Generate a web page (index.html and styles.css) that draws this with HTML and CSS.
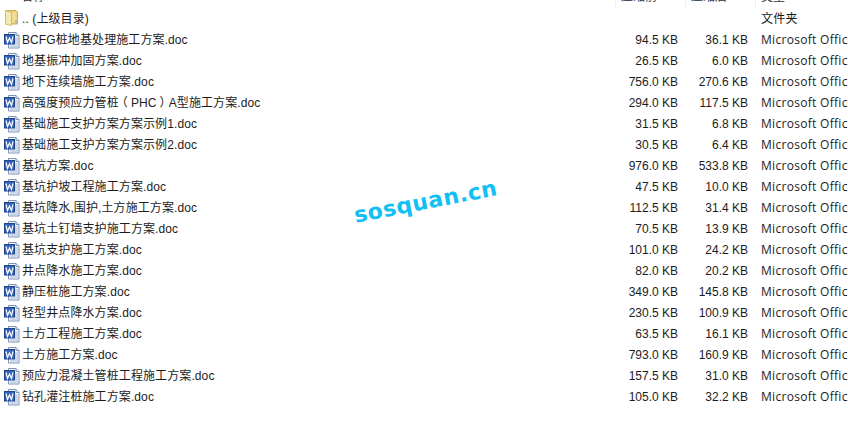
FILE: index.html
```html
<!DOCTYPE html>
<html lang="zh-CN">
<head>
    <meta charset="UTF-8">
    <title>sosquan.cn</title>
    <link rel="stylesheet" href="styles.css">
</head>
<body>
    <svg class="defs" width="0" height="0">
        <symbol id="doc" viewBox="0 0 16 17">
            <path d="M4.500.5h7.500l3 3v12.500h-10.500z" fill="#f8fafd" stroke="#7d93b8"/>
            <path d="M12 .5v3h3" fill="#dbe4f2" stroke="#7d93b8"/>
            <path d="M11 6h3M11 8h3M11 10h3M11 12h3M6 14h8" stroke="#a4b5d0"/>
            <rect x=".5" y="2.500" width="10" height="9.500" fill="#3566bb" stroke="#1f4288"/>
            <path d="M2 4.500l1.500 6 2-4.500 2 4.500 1.500-6" fill="none" stroke="#fff" stroke-width="1.200"/>
        </symbol>
    </svg>

    <div class="list">
        <div class="head">
            <span class="head-name">名称</span>
            <span class="head-cell">压缩前</span>
            <span class="head-cell">压缩后</span>
            <span class="head-cell">类型</span>
        </div>

        <div class="row">
            <span class="name">
                <svg class="icon folder" viewBox="0 0 16 17">
                    <path d="M1.500 .5h10.500l1.500 1.500v12h-12z" fill="#e8cb74" stroke="#d2b157"/>
                    <path d="M8 2h4.500v11h-4.500z" fill="#f0dc96"/>
                    <path d="M1.500 .5l6 2v13l-6-1.500z" fill="#f7eab0" stroke="#d8bb66"/>
                    <path d="M11.500 10h1v3h-1z" fill="#6fa8dc"/>
                </svg>
                .. (上级目录)
            </span>
            <span class="size"></span>
            <span class="packed"></span>
            <span class="type">文件夹</span>
        </div>
        <div class="row"><span class="name"><svg class="icon"><use href="#doc"/></svg>BCFG桩地基处理施工方案.doc</span><span class="size">94.5 KB</span><span class="packed">36.1 KB</span><span class="type">Microsoft Office</span></div>
        <div class="row"><span class="name"><svg class="icon"><use href="#doc"/></svg>地基振冲加固方案.doc</span><span class="size">26.5 KB</span><span class="packed">6.0 KB</span><span class="type">Microsoft Office</span></div>
        <div class="row"><span class="name"><svg class="icon"><use href="#doc"/></svg>地下连续墙施工方案.doc</span><span class="size">756.0 KB</span><span class="packed">270.6 KB</span><span class="type">Microsoft Office</span></div>
        <div class="row"><span class="name"><svg class="icon"><use href="#doc"/></svg><span>高强度预应力管桩<span class="paren-open">（</span>PHC<span class="paren-close">）</span>A型施工方案.doc</span></span><span class="size">294.0 KB</span><span class="packed">117.5 KB</span><span class="type">Microsoft Office</span></div>
        <div class="row"><span class="name"><svg class="icon"><use href="#doc"/></svg>基础施工支护方案方案示例1.doc</span><span class="size">31.5 KB</span><span class="packed">6.8 KB</span><span class="type">Microsoft Office</span></div>
        <div class="row"><span class="name"><svg class="icon"><use href="#doc"/></svg>基础施工支护方案方案示例2.doc</span><span class="size">30.5 KB</span><span class="packed">6.4 KB</span><span class="type">Microsoft Office</span></div>
        <div class="row"><span class="name"><svg class="icon"><use href="#doc"/></svg>基坑方案.doc</span><span class="size">976.0 KB</span><span class="packed">533.8 KB</span><span class="type">Microsoft Office</span></div>
        <div class="row"><span class="name"><svg class="icon"><use href="#doc"/></svg>基坑护坡工程施工方案.doc</span><span class="size">47.5 KB</span><span class="packed">10.0 KB</span><span class="type">Microsoft Office</span></div>
        <div class="row"><span class="name"><svg class="icon"><use href="#doc"/></svg>基坑降水,围护,土方施工方案.doc</span><span class="size">112.5 KB</span><span class="packed">31.4 KB</span><span class="type">Microsoft Office</span></div>
        <div class="row"><span class="name"><svg class="icon"><use href="#doc"/></svg>基坑土钉墙支护施工方案.doc</span><span class="size">70.5 KB</span><span class="packed">13.9 KB</span><span class="type">Microsoft Office</span></div>
        <div class="row"><span class="name"><svg class="icon"><use href="#doc"/></svg>基坑支护施工方案.doc</span><span class="size">101.0 KB</span><span class="packed">24.2 KB</span><span class="type">Microsoft Office</span></div>
        <div class="row"><span class="name"><svg class="icon"><use href="#doc"/></svg>井点降水施工方案.doc</span><span class="size">82.0 KB</span><span class="packed">20.2 KB</span><span class="type">Microsoft Office</span></div>
        <div class="row"><span class="name"><svg class="icon"><use href="#doc"/></svg>静压桩施工方案.doc</span><span class="size">349.0 KB</span><span class="packed">145.8 KB</span><span class="type">Microsoft Office</span></div>
        <div class="row"><span class="name"><svg class="icon"><use href="#doc"/></svg>轻型井点降水方案.doc</span><span class="size">230.5 KB</span><span class="packed">100.9 KB</span><span class="type">Microsoft Office</span></div>
        <div class="row"><span class="name"><svg class="icon"><use href="#doc"/></svg>土方工程施工方案.doc</span><span class="size">63.5 KB</span><span class="packed">16.1 KB</span><span class="type">Microsoft Office</span></div>
        <div class="row"><span class="name"><svg class="icon"><use href="#doc"/></svg>土方施工方案.doc</span><span class="size">793.0 KB</span><span class="packed">160.9 KB</span><span class="type">Microsoft Office</span></div>
        <div class="row"><span class="name"><svg class="icon"><use href="#doc"/></svg>预应力混凝土管桩工程施工方案.doc</span><span class="size">157.5 KB</span><span class="packed">31.0 KB</span><span class="type">Microsoft Office</span></div>
        <div class="row"><span class="name"><svg class="icon"><use href="#doc"/></svg>钻孔灌注桩施工方案.doc</span><span class="size">105.0 KB</span><span class="packed">32.2 KB</span><span class="type">Microsoft Office</span></div>
    </div>

    <div class="watermark">sosquan.cn</div>
</body>
</html>
```

FILE: styles.css
```css
html, body {
    height: 100%;
}
body {
    margin: 0;
    overflow: hidden;
    background-color: #fff;
    color: #1c1c1c;
    font-family: "Liberation Sans", "Noto Sans CJK SC", sans-serif;
    font-size: 12px;
}
.defs {
    display: block;
}
.list {
    display: flex;
    flex-direction: column;
}
.head, .row {
    display: grid;
    grid-template-columns: 615px 70px 70px 93px;
    white-space: nowrap;
}
/* only the bottom of the header text is on screen */
.head {
    height: 9px;
    overflow: hidden;
    color: #333;
    line-height: 0;
}
.head-name {
    padding-left: 21px;
    margin-top: -3px;
}
.head-cell {
    height: 12px;
    margin-top: -3px;
    padding-left: 5px;
    border-left: 1px solid #efefef;
}
.row {
    height: 21px;
    line-height: 21px;
}
.name {
    display: flex;
    align-items: center;
    gap: 2px;
    padding-left: 4px;
    letter-spacing: .1px;
}
.size, .packed {
    text-align: right;
    margin-right: 7px;
}
.type {
    margin-top: -1px;
    padding-left: 6px;
    overflow: hidden;
    font-family: "Open Sans", "Noto Sans CJK SC", sans-serif;
    letter-spacing: .3px;
}
/* centre the full width brackets in their box */
.paren-open, .paren-close {
    display: inline-block;
    line-height: 0;
}
.paren-open {
    transform: translateX(-3px);
}
.paren-close {
    transform: translateX(3px);
}
.icon {
    width: 16px;
    height: 17px;
    flex: none;
}
.folder {
    margin-bottom: 2px;
}
.watermark {
    position: absolute;
    left: 353px;
    top: 189px;
    color: #12c0f5;
    font-family: "DejaVu Sans", sans-serif;
    font-size: 22px;
    font-weight: bold;
    letter-spacing: .5px;
    transform: rotate(-11deg);
}
```
